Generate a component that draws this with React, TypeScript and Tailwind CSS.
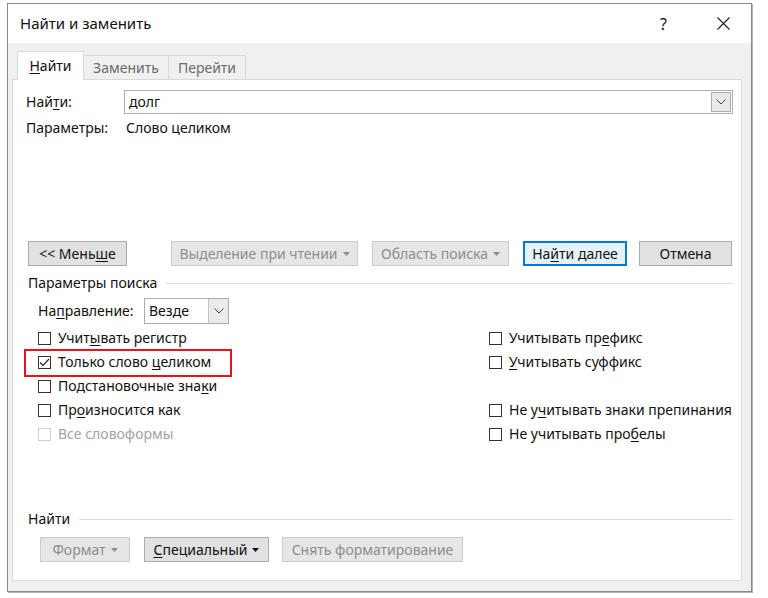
import React from "react";

function U({ children }: { children: React.ReactNode }) {
  return <span className="underline decoration-1 underline-offset-2">{children}</span>;
}

function Caret() {
  return (
    <svg width="7" height="4" viewBox="0 0 7 4" className="shrink-0">
      <path d="M0 0 H7 L3.5 4 Z" fill="currentColor" />
    </svg>
  );
}

function Chevron() {
  return (
    <svg width="10" height="6" viewBox="0 0 10 6">
      <path d="M0.5 0.5 L5 5 L9.5 0.5" fill="none" stroke="#444" strokeWidth="1" />
    </svg>
  );
}

interface BtnProps {
  children: React.ReactNode;
  className?: string;
  disabled?: boolean;
  primary?: boolean;
  arrow?: boolean;
}

function Btn({ children, className = "", disabled = false, primary = false, arrow = false }: BtnProps) {
  const tone = disabled
    ? "border border-[#cccccc] bg-[#e6e6e6] text-[#8d8d8d]"
    : primary
      ? "border-2 border-[#0078d7] bg-[#e5f1fb] text-[#111]"
      : "border border-[#adadad] bg-[#e1e1e1] text-[#111]";
  return (
    <div className={`flex h-[25px] shrink-0 items-center justify-center gap-[5px] ${tone} ${className}`}>
      <span>{children}</span>
      {arrow && <Caret />}
    </div>
  );
}

function Check({
  children,
  checked = false,
  disabled = false,
}: {
  children?: React.ReactNode;
  checked?: boolean;
  disabled?: boolean;
}) {
  if (!children) return <div className="h-[24px]" />;
  return (
    <div className="flex h-[24px] items-center gap-[7px]">
      <div
        className={`flex h-[13px] w-[13px] items-center justify-center border bg-white ${
          disabled ? "border-[#cfcfcf]" : "border-[#333]"
        }`}
      >
        {checked && (
          <svg width="11" height="9" viewBox="0 0 11 9">
            <path d="M1 4.5 L4 7.5 L10 1" fill="none" stroke="#222" strokeWidth="1.2" />
          </svg>
        )}
      </div>
      <span className={disabled ? "text-[#a3a3a3]" : "text-[#111]"}>{children}</span>
    </div>
  );
}

function SectionTitle({ children }: { children: React.ReactNode }) {
  return (
    <div className="flex h-[18px] items-center gap-[9px] pl-[15px] pr-[8px]">
      <span className="text-[#111]">{children}</span>
      <div className="h-px flex-1 bg-[#dcdcdc]" />
    </div>
  );
}

export default function App() {
  return (
    <div className="h-[598px] w-[768px] bg-white pt-[3px] pl-[7px] text-[14px] leading-none font-['Noto_Sans',sans-serif]">
      <div className="flex h-[589px] w-[745px] flex-col border border-[#8a8a8a] shadow-[1px_1px_0_#b5b5b5]">
        {/* title bar */}
        <div className="flex h-[39px] shrink-0 items-center bg-white pl-[12px] text-[15px] text-[#111]">
          <span>Найти и заменить</span>
          <span className="ml-auto mr-[50px] text-[16px]">?</span>
          <svg width="13" height="13" viewBox="0 0 13 13" className="mr-[21px]">
            <path d="M0.5 0.5 L12.5 12.5 M12.5 0.5 L0.5 12.5" stroke="#222" strokeWidth="1.1" />
          </svg>
        </div>

        {/* body */}
        <div className="flex flex-1 flex-col bg-[#f0f0f0] pl-[4px] pr-[9px] pb-[10px]">
          {/* tabs */}
          <div className="flex h-[36px] shrink-0 items-end pl-[5px]">
            <div className="relative z-10 -mb-px flex h-[29px] w-[67px] items-center justify-center border-x border-t border-[#d9d9d9] bg-white text-[#111]">
              <span>
                <U>Н</U>айти
              </span>
            </div>
            <div className="flex h-[24px] w-[85px] items-center justify-center border-t border-r border-[#d9d9d9] text-[#6b6b6b]">
              Заменить
            </div>
            <div className="flex h-[24px] w-[77px] items-center justify-center border-t border-r border-[#d9d9d9] text-[#6b6b6b]">
              Перейти
            </div>
          </div>

          {/* panel */}
          <div className="flex flex-1 flex-col border border-[#d9d9d9] bg-white">
            {/* find row */}
            <div className="mt-[10px] flex h-[24px] items-center pl-[13px] pr-[8px]">
              <span className="w-[98px] text-[#111]">
                Най<U>т</U>и:
              </span>
              <div className="flex h-[24px] flex-1 items-center border border-[#abadb3] bg-white pl-[4px] pr-px">
                <span className="text-[#111]">долг</span>
                <div className="ml-auto flex h-[20px] w-[20px] items-center justify-center border border-[#adadad] bg-[#e8e8e8]">
                  <Chevron />
                </div>
              </div>
            </div>

            <div className="mt-[4px] flex h-[20px] items-center pl-[13px] text-[#111]">
              <span className="w-[100px]">Параметры:</span>
              <span>Слово целиком</span>
            </div>

            {/* buttons */}
            <div className="mt-[103px] flex pl-[15px]">
              <Btn className="w-[99px]">
                &lt;&lt; Мень<U>ш</U>е
              </Btn>
              <Btn className="ml-[44px] w-[187px]" disabled arrow>
                Выделение при чтении
              </Btn>
              <Btn className="ml-[14px] w-[137px]" disabled arrow>
                Область поиска
              </Btn>
              <Btn className="ml-[14px] w-[104px]" primary>
                На<U>й</U>ти далее
              </Btn>
              <Btn className="ml-[12px] w-[93px]">Отмена</Btn>
            </div>

            <div className="mt-[8px]">
              <SectionTitle>Параметры поиска</SectionTitle>
            </div>

            {/* direction */}
            <div className="mt-[6px] flex h-[26px] items-center pl-[25px]">
              <span className="w-[106px] text-[#111]">
                На<U>п</U>равление:
              </span>
              <div className="flex h-[26px] w-[85px] items-stretch border border-[#abadb3] bg-white">
                <span className="flex flex-1 items-center pl-[4px] text-[#111]">Везде</span>
                <div className="flex w-[20px] items-center justify-center border-l border-[#c5c5c5] bg-[#ebebeb]">
                  <Chevron />
                </div>
              </div>
            </div>

            {/* checkboxes */}
            <div className="relative mt-[2px] grid grid-cols-[451px_1fr] pl-[25px]">
              <div className="relative flex flex-col">
                <div className="pointer-events-none absolute top-[23px] left-[-14px] h-[28px] w-[208px] border-2 border-[#e8121b]" />
                <Check>
                  Учит<U>ы</U>вать регистр
                </Check>
                <Check checked>
                  Только слово <U>ц</U>еликом
                </Check>
                <Check>
                  Подстановочные зна<U>к</U>и
                </Check>
                <Check>
                  Пр<U>о</U>износится как
                </Check>
                <Check disabled>Все словоформы</Check>
              </div>
              <div className="flex flex-col">
                <Check>
                  Учитывать пр<U>е</U>фикс
                </Check>
                <Check>
                  <U>У</U>читывать суффикс
                </Check>
                <Check />
                <Check>
                  Не у<U>ч</U>итывать знаки препинания
                </Check>
                <Check>
                  Не учитывать про<U>б</U>елы
                </Check>
              </div>
            </div>

            <div className="mt-[64px]">
              <SectionTitle>Найти</SectionTitle>
            </div>

            <div className="mt-[9px] flex pl-[27px]">
              <Btn className="w-[90px]" disabled arrow>
                Формат
              </Btn>
              <Btn className="ml-[14px] w-[125px]" arrow>
                <U>С</U>пециальный
              </Btn>
              <Btn className="ml-[13px] w-[181px]" disabled>
                Снять форматирование
              </Btn>
            </div>
          </div>
        </div>
      </div>
    </div>
  );
}
